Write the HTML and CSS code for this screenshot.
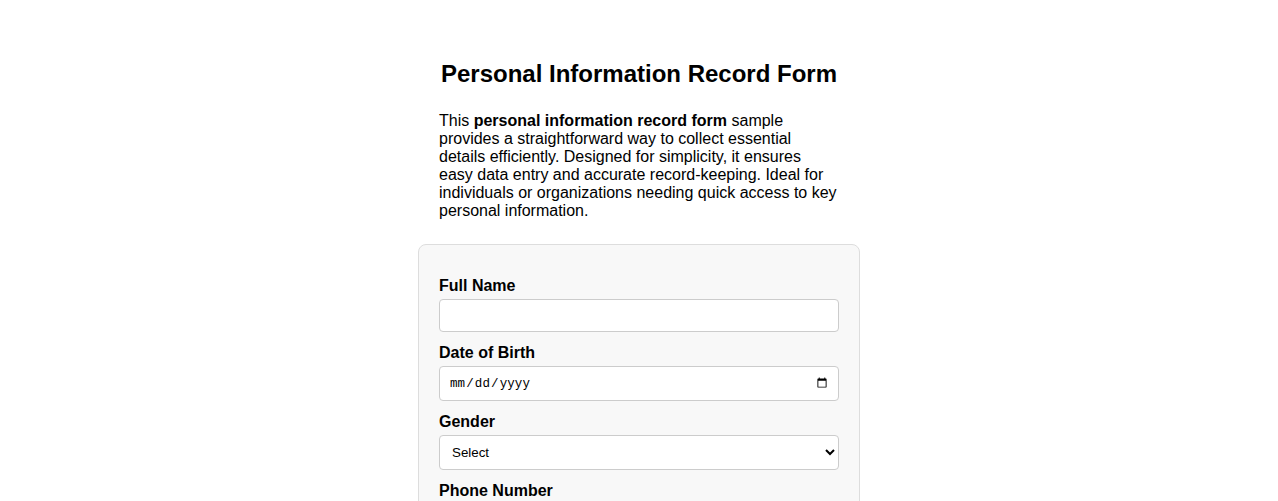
FILE: index.html
```html
<!DOCTYPE html>
<html lang="en">
<head>
<meta charset="utf-8">
<title>Personal Information Record Form</title>
<link rel="stylesheet" href="styles.css">
</head>
<body>
<div class="page">
  <h2 class="title">Personal Information Record Form</h2>
  <p class="intro">This <strong>personal information record form</strong> sample provides a straightforward way to collect essential details efficiently. Designed for simplicity, it ensures easy data entry and accurate record-keeping. Ideal for individuals or organizations needing quick access to key personal information.</p>
  <form class="form">
    <div class="field">
      <label class="label" for="name">Full Name</label>
      <input class="control" type="text" id="name">
    </div>
    <div class="field">
      <label class="label" for="dob">Date of Birth</label>
      <input class="control control-date" type="date" id="dob">
    </div>
    <div class="field">
      <label class="label" for="gender">Gender</label>
      <select class="control control-select" id="gender">
        <option>Select</option>
        <option>Male</option>
        <option>Female</option>
        <option>Other</option>
      </select>
    </div>
    <div class="field">
      <label class="label" for="phone">Phone Number</label>
      <input class="control" type="tel" id="phone">
    </div>
    <div class="field">
      <label class="label" for="email">Email Address</label>
      <input class="control" type="email" id="email">
    </div>
    <div class="field">
      <label class="label" for="address">Address</label>
      <textarea class="control" id="address" rows="3"></textarea>
    </div>
  </form>
</div>
</body>
</html>
```
FILE: styles.css
```css
html, body {
  margin: 0;
  padding: 0;
  background: #ffffff;
}
body {
  font-family: "Liberation Sans", Arial, sans-serif;
  color: #000000;
}
.page {
  width: 442px;
  margin: 0 auto;
  padding-top: 60px;
  padding-bottom: 40px;
}
.title {
  margin: 0;
  font-size: 24px;
  font-weight: bold;
  text-align: center;
}
.intro {
  width: 398px;
  margin: 24px 0 0;
  padding: 0 0 0 21px;
  font-size: 16px;
}
.form {
  margin-top: 24px;
  padding: 20px;
  background: #f8f8f8;
  border: 1px solid #dddddd;
  border-radius: 8px;
}
.field {
  display: flex;
  flex-direction: column;
}
.label {
  display: block;
  margin: 12px 0 4px;
  font-size: 16px;
  font-weight: bold;
}
.control {
  box-sizing: border-box;
  width: 100%;
  margin: 0;
  padding: 8px;
  border: 1px solid #cccccc;
  border-radius: 4px;
  background: #ffffff;
  font-family: "Liberation Sans", Arial, sans-serif;
  font-size: 13.333px;
  color: #000000;
}
.control-date {
  height: 35px;
  padding: 8px 8px 8px 9px;
  font-family: "Liberation Mono", "Courier New", monospace;
  font-size: 12.5px;
  letter-spacing: 0.1px;
}
.control-select {
  height: 35px;
  padding: 6px 8px 6px 8px;
}
textarea.control {
  resize: vertical;
}
```
